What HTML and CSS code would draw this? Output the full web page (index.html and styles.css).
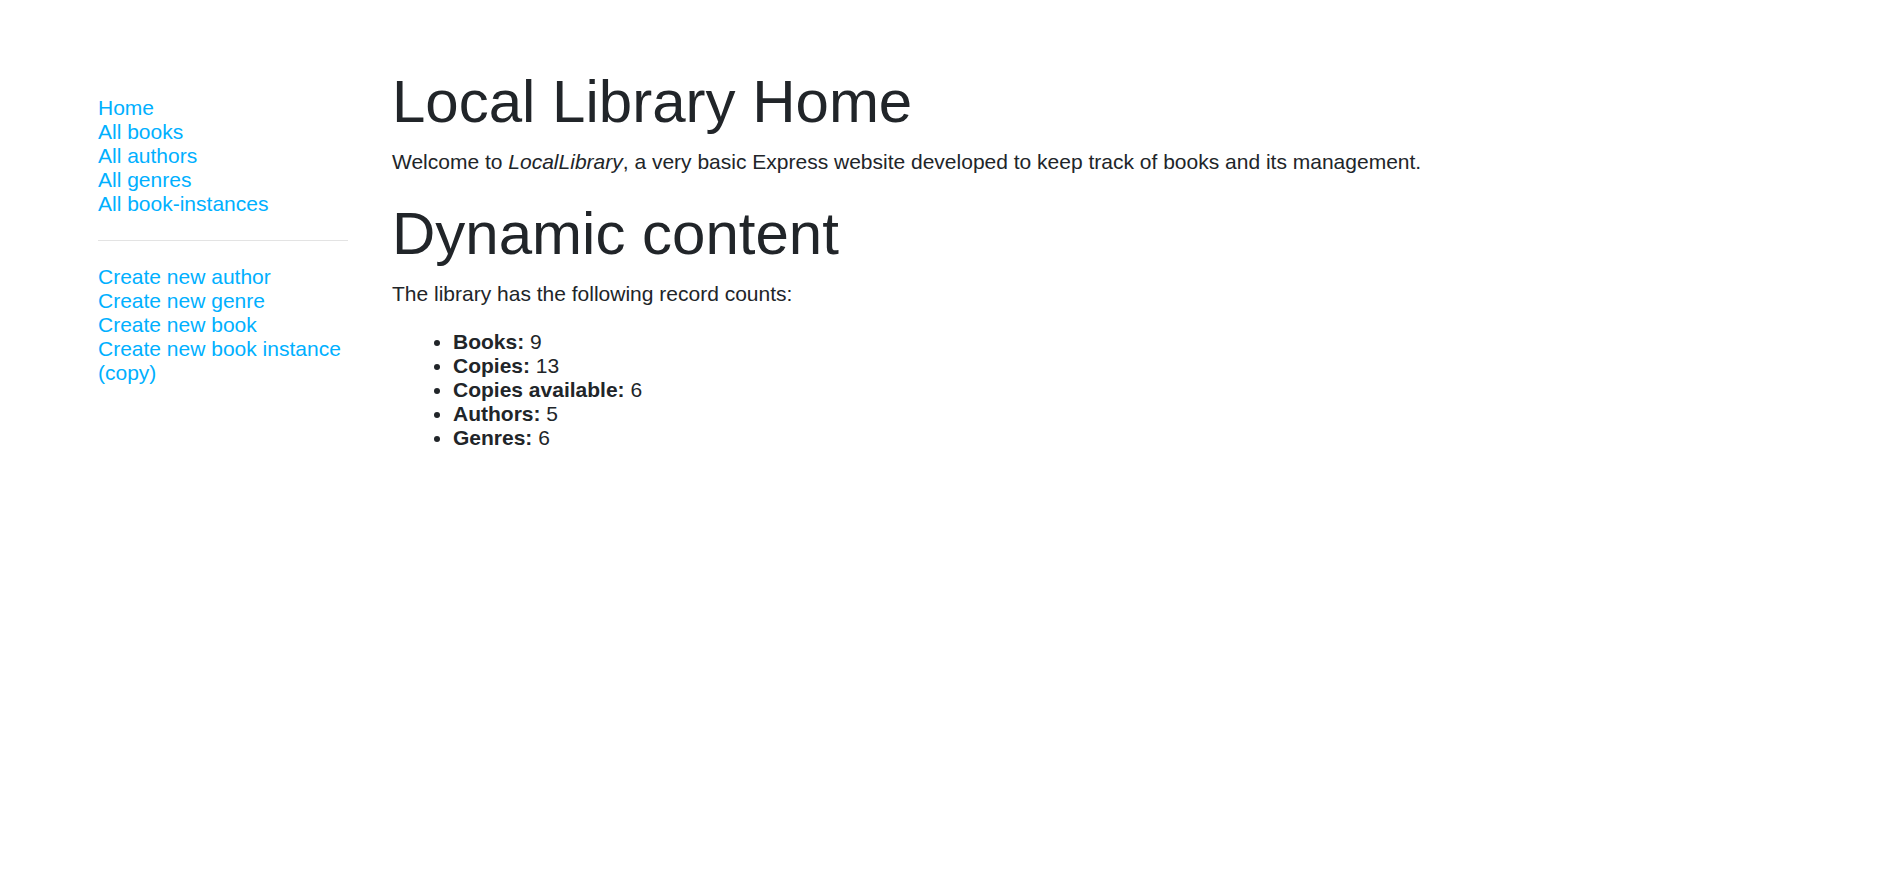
FILE: index.html
```html
<!DOCTYPE html>
<html>
<head>
<meta charset="utf-8">
<title>Local Library</title>
<link rel="stylesheet" href="styles.css">
</head>
<body>
<div class="page">
  <nav class="sidebar">
    <ul class="nav-list">
      <li><a href="#">Home</a></li>
      <li><a href="#">All books</a></li>
      <li><a href="#">All authors</a></li>
      <li><a href="#">All genres</a></li>
      <li><a href="#">All book-instances</a></li>
    </ul>
    <hr class="divider">
    <ul class="nav-list">
      <li><a href="#">Create new author</a></li>
      <li><a href="#">Create new genre</a></li>
      <li><a href="#">Create new book</a></li>
      <li><a href="#">Create new book instance (copy)</a></li>
    </ul>
  </nav>
  <main class="content">
    <h1 class="title">Local Library Home</h1>
    <p class="para">Welcome to <em>LocalLibrary</em>, a very basic Express website developed to keep track of books and its management.</p>
    <h1 class="title">Dynamic content</h1>
    <p class="para">The library has the following record counts:</p>
    <ul class="counts">
      <li><strong>Books:</strong> 9</li>
      <li><strong>Copies:</strong> 13</li>
      <li><strong>Copies available:</strong> 6</li>
      <li><strong>Authors:</strong> 5</li>
      <li><strong>Genres:</strong> 6</li>
    </ul>
  </main>
</div>
</body>
</html>
```
FILE: styles.css
```css
html, body {
  margin: 0;
  padding: 0;
  background: #fff;
}
body {
  font-family: "Liberation Sans", Arial, sans-serif;
  font-size: 21px;
  line-height: 24px;
  color: #212529;
}
.page {
  display: flex;
  align-items: flex-start;
  padding: 66px 0 0 98px;
  gap: 44px;
}
.sidebar {
  width: 250px;
  flex: none;
  padding-top: 30px;
}
.nav-list {
  list-style: none;
  margin: 0;
  padding: 0;
}
.nav-list a {
  color: #00b0ff;
  text-decoration: none;
}
.divider {
  border: 0;
  border-top: 1px solid #e3e3e3;
  margin: 24px 0 24px;
  height: 0;
}
.content {
  flex: 1;
  min-width: 0;
}
.title {
  font-size: 60px;
  line-height: 72px;
  font-weight: 400;
  margin: 0 0 12px;
}
.para {
  margin: 0 0 24px;
}
.counts {
  margin: 0;
  padding-left: 61px;
}
```
